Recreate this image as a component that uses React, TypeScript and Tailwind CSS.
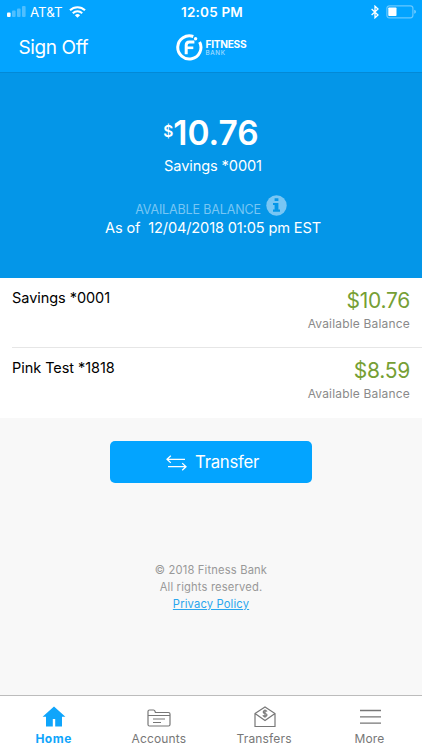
import type { ReactNode } from 'react';

const accounts = [
  { name: 'Savings *0001', balance: '$10.76' },
  { name: 'Pink Test *1818', balance: '$8.59' },
];

function StatusBar() {
  return (
    <div className="relative flex h-6 items-center justify-between pl-[7px] pr-[5px]">
      <div className="flex items-center">
        <svg width="19" height="12" viewBox="0 0 19 12" fill="white">
          <rect x="0" y="6.5" width="3.6" height="4.5" rx="1" />
          <rect x="5" y="4.5" width="3.6" height="6.5" rx="1" opacity="0.3" />
          <rect x="10" y="2.5" width="3.6" height="8.5" rx="1" opacity="0.3" />
          <rect x="15" y="0" width="3.6" height="11" rx="1" opacity="0.3" />
        </svg>
        <span className="ml-1 w-[33px] whitespace-nowrap text-[13.3px] leading-6">AT&amp;T</span>
        <svg className="ml-1.5" width="17" height="12" viewBox="0 0 17 12" fill="none" stroke="white" strokeWidth="2.1">
          <path d="M1 4.3a10.6 10.6 0 0 1 15 0" />
          <path d="M3.8 7.2a6.7 6.7 0 0 1 9.4 0" />
          <path d="M8.5 11.8 5.9 9.2a3.7 3.7 0 0 1 5.2 0z" fill="white" stroke="none" />
        </svg>
      </div>
      <span className="absolute left-[181px] whitespace-nowrap text-[13.5px] font-semibold leading-6 tracking-[0.2px]">12:05 PM</span>
      <div className="flex items-center">
        <svg className="mr-[7px]" width="8" height="14" viewBox="0 0 8 14" fill="none" stroke="white" strokeWidth="1.3">
          <path d="M.6 4 7 10 4 12.8V1.2L7 4 .6 10" />
        </svg>
        <svg width="31" height="14" viewBox="0 0 31 14">
          <rect x="0.9" y="0.8" width="26" height="12" rx="2.5" fill="none" stroke="white" strokeOpacity="0.4" strokeWidth="1.2" />
          <rect x="2.3" y="2.5" width="8.2" height="8.6" rx="0.8" fill="white" />
          <path d="M28.3 4.8v4q1.6-.5 1.6-2t-1.6-2" fill="white" opacity="0.5" />
        </svg>
      </div>
    </div>
  );
}

function Logo() {
  return (
    <div className="absolute left-[176px] top-[34px] flex">
      <svg width="27" height="27" viewBox="0 0 27 27" fill="none" stroke="white">
        <path d="M17.3 2.5A11.6 11.6 0 1 0 23.6 8" strokeWidth="3" />
        <circle cx="19.6" cy="4.7" r="1.7" fill="white" stroke="none" />
        <path d="M10.2 20.3v-9q0-3.2 3.2-3.2h5" strokeWidth="3" />
        <path d="M11 13.8h6.3" strokeWidth="2.6" />
      </svg>
      <div className="ml-[2.5px] mt-[5px]">
        <div className="whitespace-nowrap text-[10.2px] font-bold leading-[10px] tracking-[-0.3px]">FITNESS</div>
        <div className="mt-px text-[6.3px] leading-[7px] tracking-[0.7px] opacity-70">BANK</div>
      </div>
    </div>
  );
}

function Tab({ label, active, children }: { label: string; active?: boolean; children: ReactNode }) {
  return (
    <div className={`flex flex-1 flex-col items-center ${active ? 'font-bold text-[#0fa5fb]' : 'text-[#777]'}`}>
      <div className="flex h-[25px] items-center">{children}</div>
      <span className={`mt-[2px] text-[12px] leading-4 ${active ? 'tracking-[0.5px]' : 'tracking-[0.15px]'}`}>{label}</span>
    </div>
  );
}

export default function App() {
  return (
    <div className="flex h-[750px] w-[422px] flex-col overflow-hidden bg-[#f8f8f8] font-['Inter',sans-serif] text-black">
      <header className="relative h-[72px] shrink-0 bg-[#03a4ff] text-white">
        <StatusBar />
        <div className="pl-[18.5px] pt-3 text-[19px] leading-6 tracking-[-0.4px]">Sign Off</div>
        <Logo />
      </header>

      <section className="flex h-[206px] shrink-0 flex-col items-center border-t border-[#0389d6] bg-[#0496e8] text-white">
        <div className="mt-10 flex items-start font-semibold">
          <span className="mt-[9px] text-[15.5px] leading-5">$</span>
          <span className="text-[33.5px] leading-10">10.76</span>
        </div>
        <div className="mt-[3px] pl-1 text-[14.6px] leading-5 tracking-[-0.12px]">Savings *0001</div>
        <div className="mt-5 flex items-center text-[#78c6f4]">
          <span className="mt-1 text-[12.5px] leading-5 tracking-[-0.14px]">AVAILABLE BALANCE</span>
          <svg className="-mt-1.5 ml-[5px]" width="21" height="21" viewBox="0 0 21 21">
            <circle cx="10.5" cy="10.5" r="10.2" fill="currentColor" />
            <path d="M8.6 3.2h3.8v2.9H8.6zM7 8h5.4v6.6H14v2.1H7v-2.1h1.6v-4.5H7z" fill="#0496e8" />
          </svg>
        </div>
        <div className="-mt-0.5 whitespace-pre pl-1 text-[14.6px] leading-5 tracking-[-0.15px]">As of  12/04/2018 01:05 pm EST</div>
      </section>

      <section className="shrink-0 bg-white pl-3">
        {accounts.map((account, idx) => (
          <div key={account.name} className={`flex justify-between pr-3 ${idx > 0 ? 'h-[71px] border-t border-[#e6e6e6]' : 'h-[69px]'}`}>
            <span className="mt-[10px] text-[14.5px] leading-5 tracking-[-0.05px]">{account.name}</span>
            <div className="mt-[10px] text-right">
              <div className="text-[21px] leading-[26px] tracking-[-0.25px] text-[#769f35]">{account.balance}</div>
              <div className="mt-px text-[12px] leading-[18px] tracking-[0.18px] text-[#8a8a8a]">Available Balance</div>
            </div>
          </div>
        ))}
      </section>

      <button className="mx-auto mt-[23px] flex h-[42px] w-[202px] shrink-0 items-center justify-center rounded-[5px] bg-[#03a4ff] pl-[3px] text-white">
        <svg className="mt-0.5" width="21" height="16" viewBox="0 0 21 16" fill="none" stroke="white" strokeWidth="1.3">
          <path d="M19 4.3H1M4.8.7 1 4.3l3.8 3.6M2 11.7h18M16.2 8.1l3.8 3.6-3.8 3.6" />
        </svg>
        <span className="ml-2 text-[16.8px] leading-6 tracking-[-0.3px]">Transfer</span>
      </button>

      <footer className="mt-[79px] text-center text-[11.2px] leading-[17px] tracking-[0.16px] text-[#999]">
        <p>© 2018 Fitness Bank</p>
        <p>All rights reserved.</p>
        <a className="text-[#2aa6ee] underline">Privacy Policy</a>
      </footer>

      <nav className="mt-auto flex h-[55px] shrink-0 border-t border-[#bcbcbc] bg-white pl-px pt-2">
        <Tab label="Home" active>
          <svg width="24" height="22" viewBox="0 0 24 22" fill="currentColor">
            <path d="M12 .5.6 10.8H4v9.7h6.8V13h2.4v7.500H20v-9.700h3.400z" />
          </svg>
        </Tab>
        <Tab label="Accounts">
          <svg className="mt-0.5" width="24" height="20" viewBox="0 0 24 20" fill="none" stroke="currentColor" strokeWidth="1.2">
            <path d="M1 16.5v-13Q1 2 2.5 2h4Q7.6 2 8 3.2l.4 1.3h13Q23 4.500 23 6v10.500q0 1.500-1.500 1.500h-19Q1 18 1 16.500zM1 7.500h22M6 11h12M6 14.500h8" />
          </svg>
        </Tab>
        <Tab label="Transfers">
          <svg className="ml-px" width="22" height="22" viewBox="0 0 22 22" fill="none" stroke="currentColor" strokeWidth="1.2">
            <path d="M1 7.5 11 1l10 6.5v13H1zM1 7.5l10 7 10-7" />
            <path d="M13 5.6q-.5-1-2-1-1.800 0-1.800 1.400 0 1.200 1.800 1.500 2 .3 2 1.600T11 10.500q-1.700 0-2.100-1.200M11 3.500v8.200" />
          </svg>
        </Tab>
        <Tab label="More">
          <svg className="ml-0.5" width="21" height="16" viewBox="0 0 21 16" fill="none" stroke="currentColor" strokeWidth="1.3">
            <path d="M0 1.5h21M0 7.800h21M0 14.200h21" />
          </svg>
        </Tab>
      </nav>
    </div>
  );
}
